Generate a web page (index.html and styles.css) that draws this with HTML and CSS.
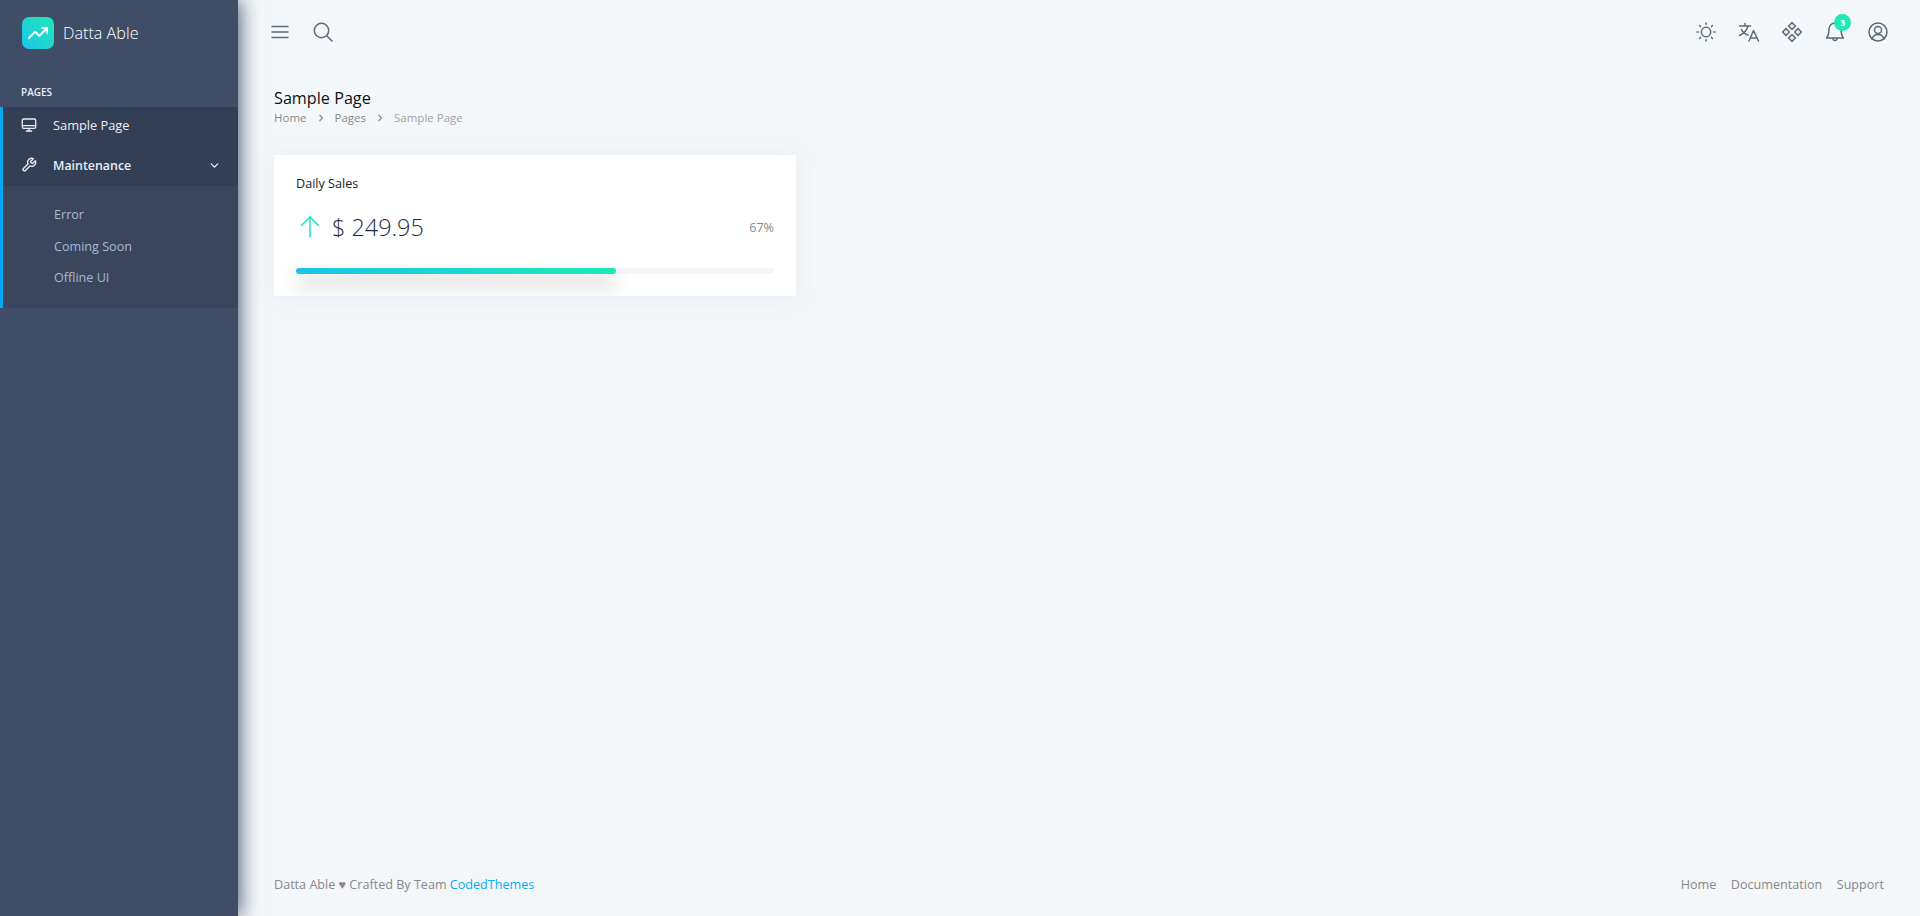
FILE: index.html
```html
<!DOCTYPE html>
<html lang="en">
  <head>
    <meta charset="UTF-8" />
    <meta name="viewport" content="width=device-width, initial-scale=1.0" />
    <title>Sample Page</title>
    <link rel="stylesheet" href="styles.css">
  </head>
  <body>
    <nav class="sidebar">
      <div class="brand">
        <div class="brand-icon">
          <svg width="20" height="20" viewBox="0 0 24 24" fill="none" stroke="#fff" stroke-width="2.4" stroke-linecap="round" stroke-linejoin="round">
            <polyline points="23 6 13.5 15.5 8.5 10.5 1 18"></polyline>
            <polyline points="17 6 23 6 23 12"></polyline>
          </svg>
        </div>
        <span class="brand-name">Datta Able</span>
      </div>

      <div class="nav-caption">Pages</div>

      <div class="nav-active">
        <a class="nav-link">
          <svg width="16" height="16" viewBox="0 0 24 24" fill="none" stroke="currentColor" stroke-width="2" stroke-linecap="round" stroke-linejoin="round">
            <rect x="2" y="3" width="20" height="14" rx="2"></rect>
            <line x1="2" y1="13" x2="22" y2="13"></line>
            <line x1="8" y1="21" x2="16" y2="21"></line>
            <line x1="12" y1="17" x2="12" y2="21"></line>
          </svg>
          <span>Sample Page</span>
        </a>
        <a class="nav-link nav-parent">
          <svg width="16" height="16" viewBox="0 0 24 24" fill="none" stroke="currentColor" stroke-width="2" stroke-linecap="round" stroke-linejoin="round">
            <path d="M14.7 6.3a1 1 0 0 0 0 1.4l1.6 1.6a1 1 0 0 0 1.4 0l3.77-3.77a6 6 0 0 1-7.94 7.94l-6.91 6.91a2.12 2.12 0 0 1-3-3l6.91-6.91a6 6 0 0 1 7.94-7.94l-3.76 3.76z"></path>
          </svg>
          <span>Maintenance</span>
          <svg class="nav-arrow" width="13" height="13" viewBox="0 0 24 24" fill="none" stroke="currentColor" stroke-width="2.4" stroke-linecap="round" stroke-linejoin="round">
            <polyline points="6 9 12 15 18 9"></polyline>
          </svg>
        </a>
      </div>
      <div class="nav-sub">
        <a>Error</a>
        <a>Coming Soon</a>
        <a>Offline UI</a>
      </div>
    </nav>

    <div class="main">
      <header class="topbar">
        <div class="topbar-group">
          <svg class="top-icon" width="24" height="24" viewBox="0 0 24 24" fill="none" stroke="currentColor" stroke-width="1.5" stroke-linecap="round">
            <line x1="4" y1="6.500" x2="20" y2="6.500"></line>
            <line x1="4" y1="12" x2="20" y2="12"></line>
            <line x1="4" y1="17.500" x2="20" y2="17.500"></line>
          </svg>
          <svg class="top-icon" width="24" height="24" viewBox="0 0 24 24" fill="none" stroke="currentColor" stroke-width="1.5" stroke-linecap="round">
            <circle cx="10.500" cy="10.500" r="7.200"></circle>
            <line x1="16" y1="16" x2="21" y2="21"></line>
          </svg>
        </div>
        <div class="topbar-group">
          <svg class="top-icon" width="24" height="24" viewBox="0 0 24 24" fill="none" stroke="currentColor" stroke-width="1.5" stroke-linecap="round">
            <circle cx="12" cy="12" r="4.700"></circle>
            <path d="M12 3v1.200M12 19.800V21M3 12h1.200M19.800 12H21M5.600 5.600l.9.9M17.500 17.500l.9.9M5.600 18.400l.9-.9M17.500 6.500l.9-.9"></path>
          </svg>
          <svg class="top-icon" width="24" height="24" viewBox="0 0 24 24" fill="none" stroke="currentColor" stroke-width="1.5" stroke-linecap="round" stroke-linejoin="round">
            <path d="M2.500 6h11M8 3.500V6M11 6c-1 4.500-4 7.500-8.500 9.500M4.500 9.500c1.200 2.600 3.500 4.600 6.500 5.500"></path>
            <path d="M12 21l4.500-10.500L21.500 21M13.500 18h6.500"></path>
          </svg>
          <svg class="top-icon" width="24" height="24" viewBox="0 0 24 24" fill="none" stroke="currentColor" stroke-width="1.5" stroke-linejoin="round">
            <path d="M12 2.600l3.400 3.400-3.400 3.400-3.400-3.400z"></path>
            <path d="M6 8.600l3.400 3.400-3.400 3.400-3.400-3.400z"></path>
            <path d="M18 8.600l3.400 3.400-3.400 3.400-3.400-3.400z"></path>
            <path d="M12 14.600l3.400 3.400-3.400 3.400-3.400-3.400z"></path>
          </svg>
          <div class="bell">
            <svg class="top-icon" width="24" height="24" viewBox="0 0 24 24" fill="none" stroke="currentColor" stroke-width="1.5" stroke-linecap="round" stroke-linejoin="round">
              <path d="M12 3a6 6 0 0 0-6 6c0 6-2.500 9-2.500 9h17S18 15 18 9a6 6 0 0 0-6-6z"></path>
              <path d="M10 18.500a2 2 0 0 0 4 0"></path>
            </svg>
            <span class="badge">3</span>
          </div>
          <svg class="top-icon" width="24" height="24" viewBox="0 0 24 24" fill="none" stroke="currentColor" stroke-width="1.5" stroke-linecap="round">
            <circle cx="12" cy="12" r="9"></circle>
            <circle cx="12" cy="10" r="3.500"></circle>
            <path d="M6 19c1-3 3.500-4.500 6-4.500s5 1.500 6 4.500"></path>
          </svg>
        </div>
      </header>

      <div class="content">
        <h5 class="page-title">Sample Page</h5>
        <div class="breadcrumb">
          <span>Home</span>
          <svg class="sep" width="8" height="8" viewBox="0 0 8 8" fill="none" stroke="currentColor" stroke-width="1.200">
            <polyline points="2.500 1 5.500 4 2.500 7"></polyline>
          </svg>
          <span>Pages</span>
          <svg class="sep" width="8" height="8" viewBox="0 0 8 8" fill="none" stroke="currentColor" stroke-width="1.200">
            <polyline points="2.500 1 5.500 4 2.500 7"></polyline>
          </svg>
          <span class="current">Sample Page</span>
        </div>

        <div class="card">
          <h6 class="card-title">Daily Sales</h6>
          <div class="sales-row">
            <div class="sales-amount">
              <svg class="sales-arrow" width="24" height="24" viewBox="0 0 24 24" fill="none" stroke="#1de9b6" stroke-width="1.500" stroke-linecap="round" stroke-linejoin="round">
                <line x1="12" y1="22" x2="12" y2="2"></line>
                <polyline points="3.500 10.500 12 2 20.500 10.500"></polyline>
              </svg>
              <span>$ 249.95</span>
            </div>
            <span class="percent">67%</span>
          </div>
          <div class="progress">
            <div class="progress-bar" style="width: 67%"></div>
          </div>
        </div>
      </div>

      <footer class="footer">
        <div>Datta Able &hearts; Crafted By Team <a class="footer-brand">CodedThemes</a></div>
        <div class="footer-links">
          <a>Home</a>
          <a>Documentation</a>
          <a>Support</a>
        </div>
      </footer>
    </div>
  </body>
</html>
```

FILE: styles.css
```css
* {
  box-sizing: border-box;
}
html,
body {
  height: 100%;
}
body {
  margin: 0;
  display: flex;
  font-family: "Open Sans", sans-serif;
  font-size: 14px;
  color: #888;
  background: #f4f7fa;
  overflow: hidden;
}
.sidebar {
  width: 238px;
  flex-shrink: 0;
  background: #3f4d67;
  color: #a9b7d0;
  box-shadow: 1px 0 20px 0 #3f4d67;
  position: relative;
  z-index: 2;
}
.brand {
  height: 64px;
  padding: 17px 0 0 22px;
  display: flex;
  align-items: flex-start;
  gap: 9px;
}
.brand-icon {
  width: 32px;
  height: 32px;
  border-radius: 7px;
  background: linear-gradient(-135deg, #1de9b6 0%, #1dc4e9 100%);
  display: flex;
  align-items: center;
  justify-content: center;
}
.brand-name {
  font-size: 16.2px;
  font-weight: 300;
  color: #fff;
  line-height: 32px;
}
.nav-caption {
  padding: 21px 0 0 21px;
  height: 43px;
  font-size: 10px;
  font-weight: 600;
  line-height: 14px;
  text-transform: uppercase;
  color: #e8edf7;
}
.nav-active {
  background: #333f54;
  border-left: 3px solid #04a9f5;
  color: #fff;
}
.nav-link {
  height: 39.5px;
  padding: 0 17px 3px 18px;
  display: flex;
  align-items: center;
  gap: 16px;
  font-size: 12.8px;
  font-weight: 500;
  color: #e8edf7;
}
.nav-parent {
  padding-bottom: 2px;
  font-size: 12.4px;
  font-weight: 600;
}
.nav-parent span {
  flex: 1;
}
.nav-sub {
  height: 122px;
  padding-top: 13px;
  background: #39465e;
  border-left: 3px solid #04a9f5;
  display: flex;
  flex-direction: column;
}
.nav-sub a {
  height: 31.500px;
  padding-left: 51px;
  font-size: 12.6px;
  line-height: 31px;
  color: #a9b7d0;
}
.main {
  flex: 1;
  min-width: 0;
  display: flex;
  flex-direction: column;
}
.topbar {
  height: 64px;
  padding: 0 30px;
  display: flex;
  align-items: center;
  justify-content: space-between;
}
.topbar-group {
  display: flex;
  align-items: center;
  gap: 19px;
}
.top-icon {
  display: block;
  color: #5b6b79;
}
.bell {
  position: relative;
}
.badge {
  position: absolute;
  top: -6px;
  left: 11px;
  width: 17px;
  height: 17px;
  border-radius: 50%;
  background: #1de9b6;
  color: #fff;
  font-size: 9px;
  font-weight: 700;
  line-height: 17px;
  text-align: center;
}
.content {
  flex: 1;
  padding: 23px 36px 0;
}
.page-title {
  margin: 0;
  font-size: 16.2px;
  font-weight: 400;
  line-height: 22px;
  color: #111;
}
.breadcrumb {
  display: flex;
  align-items: center;
  height: 17px;
  font-size: 11.5px;
  line-height: 17px;
  color: #888;
}
.sep {
  margin: 0 10px;
}
.current {
  color: #a0a3a8;
}
.card {
  width: 522px;
  height: 141px;
  margin-top: 29px;
  padding: 20px 22px;
  background: #fff;
  box-shadow: 0 1px 20px 0 rgba(69, 90, 100, 0.08);
  overflow: hidden;
}
.card-title {
  margin: 0;
  font-size: 12.6px;
  font-weight: 400;
  line-height: 18px;
  color: #222;
}
.sales-row {
  margin-top: 16px;
  display: flex;
  align-items: center;
  justify-content: space-between;
}
.sales-amount {
  display: flex;
  align-items: center;
  gap: 10px;
  font-size: 23.4px;
  font-weight: 300;
  line-height: 36px;
  color: #1f2a3d;
}
.sales-arrow {
  margin-left: 2px;
}
.percent {
  font-size: 12.6px;
  color: #888;
}
.progress {
  margin-top: 23px;
  height: 6px;
  border-radius: 4px;
  background: #f4f7fa;
}
.progress-bar {
  height: 100%;
  border-radius: 4px;
  background: linear-gradient(to right, #1dc4e9 0%, #1de9b6 100%);
  box-shadow: 0 10px 20px 0 rgba(0, 0, 0, 0.3);
}
.footer {
  height: 63px;
  padding: 0 36px;
  display: flex;
  align-items: center;
  justify-content: space-between;
  font-size: 12.6px;
  color: #888;
}
.footer-brand {
  color: #04a9f5;
}
.footer-links {
  display: flex;
  gap: 14.5px;
}
```
